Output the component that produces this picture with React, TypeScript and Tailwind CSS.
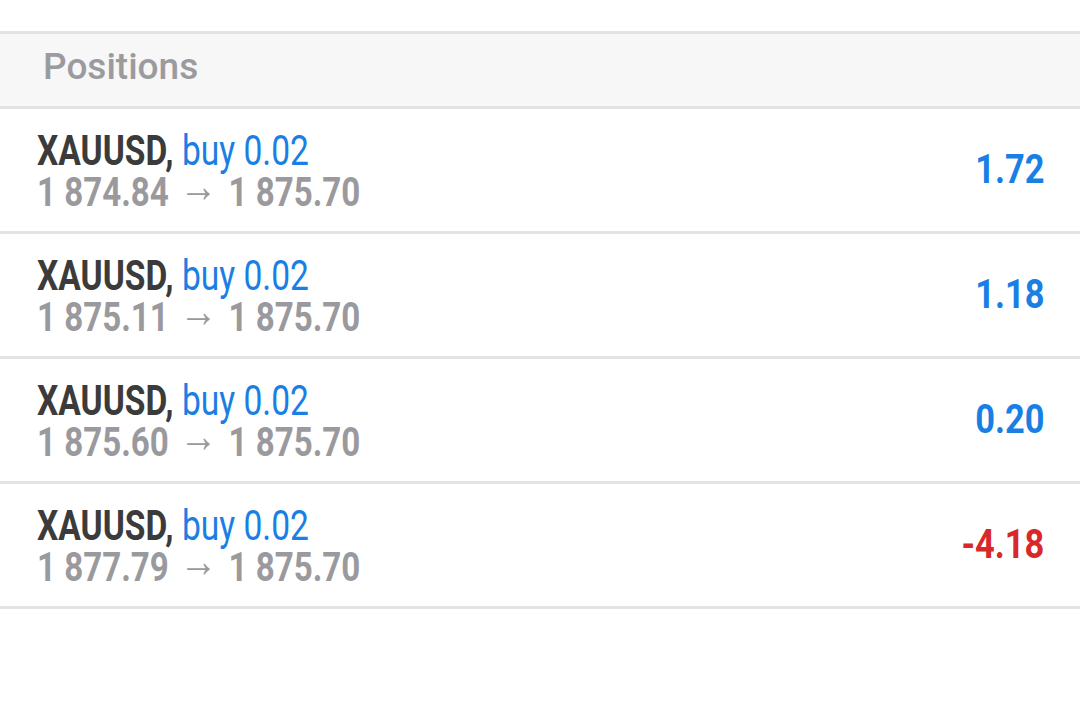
import React from 'react';

type Position = {
    symbol: string;
    side: string;
    volume: string;
    open: string;
    current: string;
    profit: string;
};

const positions: Position[] = [
    { symbol: 'XAUUSD', side: 'buy', volume: '0.02', open: '1 874.84', current: '1 875.70', profit: '1.72' },
    { symbol: 'XAUUSD', side: 'buy', volume: '0.02', open: '1 875.11', current: '1 875.70', profit: '1.18' },
    { symbol: 'XAUUSD', side: 'buy', volume: '0.02', open: '1 875.60', current: '1 875.70', profit: '0.20' },
    { symbol: 'XAUUSD', side: 'buy', volume: '0.02', open: '1 877.79', current: '1 875.70', profit: '-4.18' },
];

const PositionRow: React.FC<{ p: Position }> = ({ p }) => {
    const negative = p.profit.startsWith('-');
    return (
        <div className="flex justify-between h-[122px] border-b-[3px] border-[#e3e3e3] pl-[37px] pr-[36px] box-content">
            <div className="flex flex-col pt-[21px] whitespace-nowrap">
                <div className="origin-left scale-x-[0.78] text-[43px] leading-[41px]">
                    <span className="font-bold text-[#3b3b3b]">{p.symbol},</span>{' '}
                    <span className="text-[#1a7fe4]">{p.side} {p.volume}</span>
                </div>
                <div className="mt-[3px] origin-left scale-x-[0.828] text-[40px] leading-[37px] font-bold text-[#9a9a9e]">
                    {p.open}
                    <span className="inline-block w-[72px] text-center font-medium text-[46px] leading-[24px] relative -top-[4px]">→</span>
                    {p.current}
                </div>
            </div>
            <div
                className={`self-center origin-right scale-x-[0.86] text-[40px] font-bold whitespace-nowrap ${negative ? 'text-[#d9282a]' : 'text-[#1a7fe4]'}`}
            >
                {p.profit}
            </div>
        </div>
    );
};

export default function App() {
    return (
        <div className="w-[1080px] h-[701px] bg-white overflow-hidden" style={{ fontFamily: 'Roboto, "Noto Sans", sans-serif' }}>
            <div className="h-[31px]" />
            <div className="h-[78px] bg-[#f7f7f7] border-t-[3px] border-b-[3px] border-[#e3e3e3]">
                <div className="pl-[43px] pt-[11px] text-[37px] leading-[44px] font-medium text-[#9b9b9f]">Positions</div>
            </div>
            {positions.map((p, i) => (
                <PositionRow key={i} p={p} />
            ))}
        </div>
    );
}
